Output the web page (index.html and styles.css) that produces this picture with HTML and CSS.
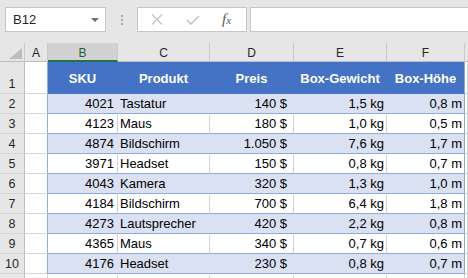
FILE: index.html
```html
<!DOCTYPE html>
<html lang="de">
<head>
<meta charset="utf-8">
<link rel="stylesheet" href="styles.css">
</head>
<body>
<div class="fbar">
  <div class="namebox">
    <span class="ref">B12</span>
    <svg class="caret" width="8" height="4" viewBox="0 0 8 4"><path d="M0 0H8L4 4Z" fill="#6d6d6d"/></svg>
  </div>
  <div class="dots"><i></i><i></i><i></i></div>
  <div class="fxbox">
    <svg class="ico-x" width="12" height="11" viewBox="0 0 12 11"><path d="M1 0.5L11 10.5M11 0.5L1 10.5" stroke="#c4c4c4" stroke-width="1.4" fill="none"/></svg>
    <svg class="ico-ok" width="14" height="10" viewBox="0 0 14 10"><path d="M1 5L5 9L13 1" stroke="#c4c4c4" stroke-width="1.6" fill="none"/></svg>
    <span class="fx">f<span class="fx-x">x</span></span>
  </div>
  <div class="input"></div>
</div>
<div class="sheet">
  <div class="ch corner"><svg width="13" height="11" viewBox="0 0 13 11"><path d="M13 0V11H0Z" fill="#bdbdbd"/></svg></div>
  <div class="ch">A</div>
  <div class="ch sel">B</div>
  <div class="ch">C</div>
  <div class="ch">D</div>
  <div class="ch">E</div>
  <div class="ch">F</div>
  <div class="ch rest"></div>

  <div class="rh">1</div><div class="ca tb"></div>
  <div class="c h">SKU</div><div class="c h">Produkt</div><div class="c h">Preis</div><div class="c h">Box-Gewicht</div><div class="c h last">Box-Höhe</div><div class="g"></div>

  <div class="rh">2</div><div class="ca tb"></div>
  <div class="c band n b">4021</div><div class="c band t">Tastatur</div><div class="c band n d">140 $</div><div class="c band n e">1,5 kg</div><div class="c band n f last">0,8 m</div><div class="g"></div>

  <div class="rh">3</div><div class="ca tb"></div>
  <div class="c n b">4123</div><div class="c t">Maus</div><div class="c n d">180 $</div><div class="c n e">1,0 kg</div><div class="c n f last">0,5 m</div><div class="g"></div>

  <div class="rh">4</div><div class="ca tb"></div>
  <div class="c band n b">4874</div><div class="c band t">Bildschirm</div><div class="c band n d">1.050 $</div><div class="c band n e">7,6 kg</div><div class="c band n f last">1,7 m</div><div class="g"></div>

  <div class="rh">5</div><div class="ca tb"></div>
  <div class="c n b">3971</div><div class="c t">Headset</div><div class="c n d">150 $</div><div class="c n e">0,8 kg</div><div class="c n f last">0,7 m</div><div class="g"></div>

  <div class="rh">6</div><div class="ca tb"></div>
  <div class="c band n b">4043</div><div class="c band t">Kamera</div><div class="c band n d">320 $</div><div class="c band n e">1,3 kg</div><div class="c band n f last">1,0 m</div><div class="g"></div>

  <div class="rh">7</div><div class="ca tb"></div>
  <div class="c n b">4184</div><div class="c t">Bildschirm</div><div class="c n d">700 $</div><div class="c n e">6,4 kg</div><div class="c n f last">1,8 m</div><div class="g"></div>

  <div class="rh">8</div><div class="ca tb"></div>
  <div class="c band n b">4273</div><div class="c band t">Lautsprecher</div><div class="c band n d">420 $</div><div class="c band n e">2,2 kg</div><div class="c band n f last">0,8 m</div><div class="g"></div>

  <div class="rh">9</div><div class="ca tb"></div>
  <div class="c n b">4365</div><div class="c t">Maus</div><div class="c n d">340 $</div><div class="c n e">0,7 kg</div><div class="c n f last">0,6 m</div><div class="g"></div>

  <div class="rh">10</div><div class="ca tb"></div>
  <div class="c band n b">4176</div><div class="c band t">Headset</div><div class="c band n d">230 $</div><div class="c band n e">0,8 kg</div><div class="c band n f last">0,7 m</div><div class="g"></div>

  <div class="rh"></div><div class="ca"></div>
  <div class="g"></div><div class="g"></div><div class="g"></div><div class="g"></div><div class="g"></div><div class="g"></div>
</div>
</body>
</html>
```

FILE: styles.css
```css
* { box-sizing: border-box; }
html, body {
  margin: 0;
  padding: 0;
  width: 468px;
  height: 278px;
  overflow: hidden;
  background: #e6e6e6;
  font-family: "Liberation Sans", Arial, sans-serif;
}

.fbar {
  height: 43px;
  display: flex;
  align-items: flex-start;
  padding: 7px 0 0 5px;
}
.namebox {
  width: 101px;
  height: 25px;
  background: #fff;
  border: 1px solid #c6c6c6;
  display: flex;
  align-items: center;
  justify-content: space-between;
  padding: 0 6px 0 7px;
}
.ref {
  font-size: 13px;
  color: #262626;
}
.caret { margin-top: 1px; }
.dots {
  width: 31px;
  height: 25px;
  display: flex;
  flex-direction: column;
  align-items: center;
  justify-content: center;
  gap: 2px;
}
.dots i {
  display: block;
  width: 2px;
  height: 2px;
  background: #a6a6a6;
}
.fxbox {
  width: 110px;
  height: 25px;
  background: #fff;
  border: 1px solid #c6c6c6;
  display: flex;
  align-items: center;
  padding: 0 0 0 13px;
}
.ico-x { margin-right: 23px; }
.ico-ok { margin-right: 22px; }
.fx {
  font-family: "Liberation Serif", "Times New Roman", serif;
  font-style: italic;
  font-size: 15px;
  color: #5a5a5a;
}
.fx-x { font-size: 11px; }
.input {
  margin-left: 3px;
  flex: 1;
  height: 25px;
  background: #fff;
  border: 1px solid #c6c6c6;
  border-right: none;
}

.sheet {
  display: grid;
  grid-template-columns: 25px 23px 70px 92px 84px 93px 78px 1fr;
  grid-template-rows: 19px 32px;
  grid-auto-rows: 20px;
  background: #fff;
}
.ch {
  background: #e6e6e6;
  border-right: 1px solid #c9c9c9;
  border-bottom: 1px solid #bdbdbd;
  font-size: 12px;
  color: #262626;
  display: flex;
  align-items: center;
  justify-content: center;
  padding-top: 1px;
}
.ch.corner {
  justify-content: flex-end;
  align-items: flex-end;
  padding: 0 2px 2px 0;
}
.ch.corner svg { display: block; }
.ch.sel {
  background: #d2d2d2;
  border-bottom: 2px solid #217346;
  color: #1d5e3a;
  padding-top: 2px;
}
.ch.rest { border-right: none; }

.rh {
  background: #e6e6e6;
  border-right: 1px solid #bdbdbd;
  border-bottom: 1px solid #d6d6d6;
  font-size: 12.5px;
  color: #262626;
  display: flex;
  align-items: flex-end;
  justify-content: center;
  padding-bottom: 2px;
}
.ca {
  border-right: 1px solid #d4d4d4;
  border-bottom: 1px solid #d4d4d4;
}
.ca.tb { border-right-color: #8ea9db; }
.g {
  border-right: 1px solid #d4d4d4;
  border-bottom: 1px solid #d4d4d4;
}

.c {
  font-size: 13px;
  color: #000;
  border-right: 1px solid #d4d4d4;
  border-bottom: 1px solid #8ea9db;
  display: flex;
  align-items: flex-end;
  padding-bottom: 2px;
  white-space: nowrap;
  line-height: 15px;
}
.c.h {
  background: #4472c4;
  color: #fff;
  font-weight: bold;
  justify-content: center;
  border-right-color: #4472c4;
  border-bottom-color: #4472c4;
  padding-bottom: 7px;
}
.c.band {
  background: #d9e1f2;
  border-right-color: #d9e1f2;
}
.c.last { border-right-color: #8ea9db; }
.c.n { justify-content: flex-end; }
.c.t { padding-left: 2px; }
.c.b { padding-right: 3px; }
.c.d { padding-right: 6px; }
.c.e { padding-right: 2px; }
.c.f { padding-right: 2px; }
```
